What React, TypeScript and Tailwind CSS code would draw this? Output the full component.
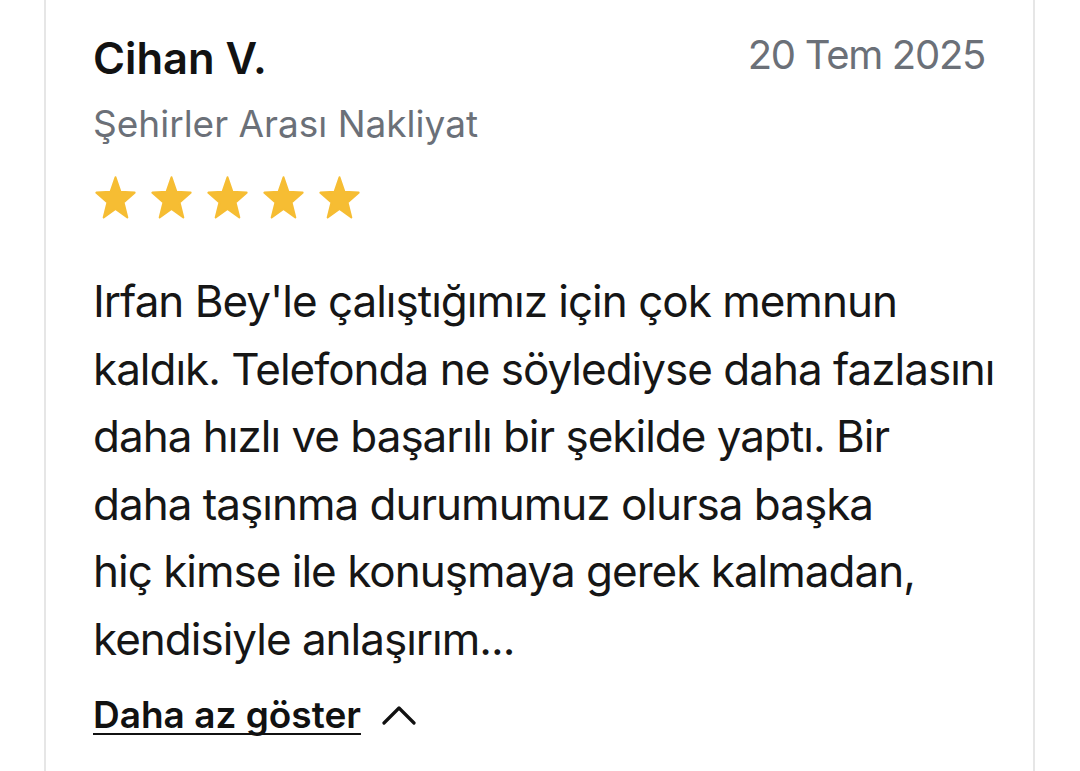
const font = { fontFamily: "Inter, 'Noto Sans', sans-serif" };

const lines = [
  "Irfan Bey'le çalıştığımız için çok memnun",
  "kaldık. Telefonda ne söylediyse daha fazlasını",
  "daha hızlı ve başarılı bir şekilde yaptı. Bir",
  "daha taşınma durumumuz olursa başka",
  "hiç kimse ile konuşmaya gerek kalmadan,",
  "kendisiyle anlaşırım...",
];

// rounded five-point star, slightly taller than wide like the reference
function Star() {
  return (
    <svg width="41" height="43" viewBox="-1.02 -1.06 2.04 1.94" preserveAspectRatio="none" className="shrink-0">
      <polygon
        points="0,-1 0.247,-0.34 0.951,-0.309 0.399,0.13 0.588,0.809 0,0.42 -0.588,0.809 -0.399,0.13 -0.951,-0.309 -0.247,-0.34"
        fill="#F6BD33"
        stroke="#F6BD33"
        strokeWidth="0.1"
        strokeLinejoin="round"
      />
    </svg>
  );
}

export default function App() {
  return (
    <div className="min-h-screen bg-white overflow-hidden" style={font}>
      <div className="ml-[44px] w-[991px] min-h-[771px] border-x-2 border-[#e6e6e6] pl-[47px] pr-[48px] pt-[30px]">
        {/* header */}
        <div className="flex items-start justify-between">
          <div className="text-[43.5px] leading-[56px] font-semibold text-[#121212]">
            Cihan V.
          </div>
          <div className="mt-[-3px] text-[40px] leading-[56px] tracking-[-1.3px] text-[#6b7078]">
            20 Tem 2025
          </div>
        </div>

        <div className="mt-[14px] text-[37px] leading-[48px] text-[#6b7078]">
          Şehirler Arası Nakliyat
        </div>

        <div className="mt-[28px] flex gap-[15px] ml-[2px]">
          <Star />
          <Star />
          <Star />
          <Star />
          <Star />
        </div>

        {/* review text */}
        <div className="mt-[49px] text-[44px] leading-[67.5px] tracking-[-1px] text-[#161616]">
          {lines.map((l) => (
            <div key={l} className="whitespace-nowrap">
              {l}
            </div>
          ))}
        </div>

        <button className="mt-[18px] flex items-center gap-[21px] text-[37px] leading-[48px] font-semibold text-[#111]">
          <span className="underline decoration-2 underline-offset-[5px] [text-decoration-skip-ink:none]">
            Daha az göster
          </span>
          <svg width="34" height="20" viewBox="0 0 34 20" fill="none">
            <polyline
              points="2,18 17,3 32,18"
              stroke="#111"
              strokeWidth="3.2"
              strokeLinecap="round"
              strokeLinejoin="round"
            />
          </svg>
        </button>
      </div>
    </div>
  );
}
